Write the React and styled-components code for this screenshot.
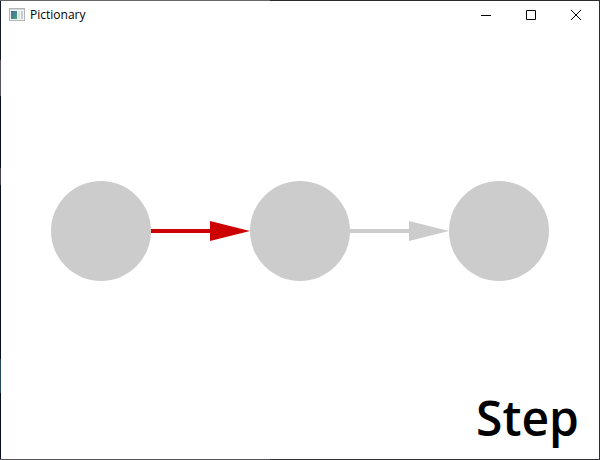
import React from "react";
import styled, { createGlobalStyle } from "styled-components";

const GlobalStyle = createGlobalStyle`
  *, *::before, *::after { box-sizing: border-box; }
  body { margin: 0; background: #ffffff; }
`;

/* The desktop shows as a one-pixel rim around the window. */
const Desktop = styled.div`
  display: flex;
  min-height: 100vh;
  padding: 1px;
  background:
    linear-gradient(90deg, #666666 270px, #2b2b2b 270px) top / 100% 1px no-repeat,
    linear-gradient(90deg, #555558 270px, #303036 270px) bottom / 100% 1px no-repeat,
    linear-gradient(
      #111a26 60px, #55525c 60px, #55525c 96px, #06101e 96px,
      #06101e 168px, #44444c 168px, #44444c 185px, #06101e 185px,
      #06101e 359px, #24485c 359px, #24485c 393px, #06101e 393px
    ) left / 1px 100% no-repeat,
    #2b2b30;
`;

const Window = styled.main`
  flex: 1;
  display: flex;
  flex-direction: column;
  background: #ffffff;
  color: #000000;
`;

const TitleBar = styled.header`
  display: flex;
  align-items: center;
  height: 28px;
  padding-left: 8px;
`;

const Title = styled.h1`
  flex: 1;
  margin: 0 0 0 5px;
  font: 400 12px/18px "Open Sans", "Noto Sans", sans-serif;
`;

const WindowButton = styled.button`
  display: grid;
  place-items: center;
  width: 45px;
  height: 28px;
  padding: 0;
  border: 0;
  background: transparent;
  color: inherit;
  &:hover { background: #e5e5e5; }
`;

const WindowControls = styled.div`
  display: flex;
  padding-right: 1px;
`;

const Canvas = styled.section`
  flex: 1;
  display: flex;
  flex-direction: column;
  justify-content: space-between;
  padding: 152px 0 13px;
`;

const Diagram = styled.div`
  display: flex;
  align-items: center;
  padding: 0 50px;
`;

const Node = styled.div`
  flex: none;
  width: 100px;
  height: 100px;
  border-radius: 50%;
  background: #cccccc;
`;

const Arrow = styled.div`
  flex: 1;
  display: flex;
  align-items: center;
  color: ${({ $active }) => ($active ? "#cc0000" : "#cccccc")};
`;

const Shaft = styled.div`
  flex: 1;
  height: 4px;
  background: currentColor;
`;

const Head = styled.svg`
  display: block;
  flex: none;
`;

const StepButton = styled.button`
  align-self: flex-end;
  margin-right: 20px;
  padding: 0;
  border: 0;
  background: transparent;
  color: inherit;
  font: 600 48px/56px "Open Sans", "Noto Sans", sans-serif;
`;

function AppIcon() {
  return (
    <svg width="16" height="16" viewBox="0 0 16 16" aria-hidden="true">
      <defs>
        <linearGradient id="pane" x1="0" y1="0" x2="1" y2="1">
          <stop offset="0" stopColor="#3b6f9c" />
          <stop offset="1" stopColor="#4fa07c" />
        </linearGradient>
      </defs>
      <rect x="0.5" y="1.5" width="15" height="12" fill="#f4f4f4" stroke="#b2b5b8" />
      <path d="M1 2.5h14" stroke="#d3d8dc" />
      <rect x="2" y="4" width="6" height="8" fill="url(#pane)" />
      <rect x="9" y="4" width="2" height="8" fill="#dde2e4" />
      <rect x="12" y="4" width="2" height="8" fill="#c4cdd2" />
    </svg>
  );
}

function Connector({ active }) {
  return (
    <Arrow $active={active}>
      <Shaft />
      <Head width="40" height="20" viewBox="0 0 40 20" aria-hidden="true">
        <path d="M0 0L40 10L0 20Z" fill="currentColor" />
      </Head>
    </Arrow>
  );
}

const controls = [
  { label: "Minimize", shape: <path d="M0 5.5h10" /> },
  { label: "Maximize", shape: <path d="M.5 .5h9v9h-9z" /> },
  { label: "Close", shape: <path d="M0 0L10 10M10 0L0 10" /> },
];

export default function App() {
  return (
    <>
      <GlobalStyle />
      <Desktop>
        <Window>
          <TitleBar>
            <AppIcon />
            <Title>Pictionary</Title>
            <WindowControls>
              {controls.map(({ label, shape }) => (
                <WindowButton key={label} type="button" aria-label={label}>
                  <svg width="10" height="10" viewBox="0 0 10 10" fill="none" stroke="currentColor">
                    {shape}
                  </svg>
                </WindowButton>
              ))}
            </WindowControls>
          </TitleBar>
          <Canvas>
            <Diagram>
              <Node />
              <Connector active />
              <Node />
              <Connector />
              <Node />
            </Diagram>
            <StepButton type="button">Step</StepButton>
          </Canvas>
        </Window>
      </Desktop>
    </>
  );
}
